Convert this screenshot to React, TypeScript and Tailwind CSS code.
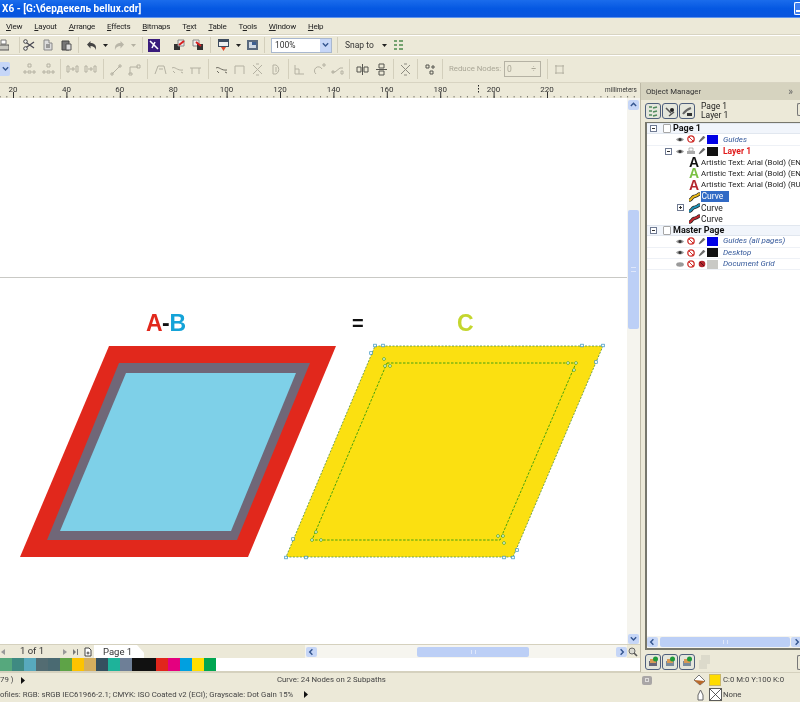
import React from 'react';

const menus = [
  ['V', 'iew'], ['L', 'ayout'], ['A', 'rrange'], ['E', 'ffects'], ['B', 'itmaps'],
  ['Te', 'xt'], ['T', 'able'], ['To', 'ols'], ['W', 'indow'], ['H', 'elp'],
];

const palette = [
  '#56a87d', '#3f8a82', '#58a9bd', '#536c72', '#4a6a72', '#5ea347', '#fdc300', '#d4ae5e', '#35505f',
  '#1eb39a', '#6e7f97', '#111111', '#111111', '#e1261c', '#e4007f', '#00a0e0', '#ffde00', '#00a651',
];

const GREY = '#b4b1a2';
const DARK = '#55554f';

const Ico = ({ w = 12, h = 12, vb, className = '', children }: { w?: number; h?: number; vb?: string; className?: string; children: React.ReactNode }) => (
  <svg width={w} height={h} viewBox={vb ?? `0 0 ${w} ${h}`} fill="none" className={`shrink-0 ${className}`}>{children}</svg>
);

const Sep = ({ className = '', tall = false }: { className?: string; tall?: boolean }) => (
  <div className={`${tall ? 'h-[20px]' : 'h-[16px]'} w-[2px] shrink-0 border-l border-[#d3cfbc] border-r-white ${className}`} />
);

const Drop = ({ className = '', grey = false }: { className?: string; grey?: boolean }) => (
  <Ico w={5} h={3} className={className}><path d="M0 0h5L2.500 3z" fill={grey ? GREY : '#222'} /></Ico>
);

const Chevron = ({ dir }: { dir: 'up' | 'down' | 'left' | 'right' }) => {
  const d = { up: 'M1.500 5.500 4.500 2.500 7.500 5.500', down: 'M1.500 2.500 4.500 5.500 7.500 2.500', left: 'M5.500 1.500 2.500 4.500 5.500 7.500', right: 'M3.500 1.500 6.500 4.500 3.500 7.500' }[dir];
  return <Ico w={9} h={8} vb="0 0 9 9"><path d={d} stroke="#34558f" strokeWidth="1.600" /></Ico>;
};

const ScrollBtn = ({ dir, className = '' }: { dir: 'up' | 'down' | 'left' | 'right'; className?: string }) => (
  <div className={`w-[11px] h-[10px] shrink-0 rounded-[2px] bg-[#c6d6f7] flex items-center justify-center ${className}`}><Chevron dir={dir} /></div>
);

// node tool icons in the property bar
const NodeIco = ({ variant, color = GREY }: { variant: number; color?: string }) => {
  const paths = [
    'M5 1h3v3H5zM1 8h2v2H1zM5 8h3v2H5zM10 8h2v2h-2z',
    'M1 3h2v6H1zM10 3h2v6h-2zM4 6h5M7 4v4',
    'M2 11 10 3M9 2h2v2H9zM1 10h2v2H1z',
    'M2 11V4h8M9 2h3v3H9zM1 10h3v2H1z',
    'M1 11 4 3h6l2 8M5 6h4',
    'M1 5c3-2 5 3 11 2M2 8l2 2M10 9l2 1',
    'M1 5h11M3 5v6M10 5v6',
    'M2 11V3h9v8',
    'M2 2l9 9M11 2l-9 9M5 1h3M5 12h3',
    'M3 2h3a5 5 0 0 1 0 9H3zM6 4v5',
    'M2 2v9h9M2 6h4v5',
    'M3 11a4 4 0 1 1 6-5M10 1h2v2h-2z',
    'M1 9h3l5-4h3M10 8h2v3h-2zM1 8h2v2H1z',
    'M1 4h4v5H1zM8 4h4v5H8zM6.500 1v11',
    'M4 1h5v4H4zM4 8h5v4H4zM1 6.500h11',
    'M2 2h3v3H2zM8 3h2v2H8zM6 8h3v3H6z',
    'M2 3h9M2 10h9M3 2v9M10 2v9',
  ];
  return <Ico w={13} h={13}><path d={paths[variant]} stroke={color} strokeWidth="1" /></Ico>;
};

const TitleBar = () => (
  <div className="h-[18px] shrink-0 flex items-center justify-between bg-gradient-to-b from-[#1a6cec] via-[#0558e2] to-[#0a55de] border-b border-[#5f95ee]">
    <span className="ml-[2px] text-[10px] font-bold tracking-[0.05px] text-white whitespace-nowrap">X6 - [G:\бердекель bellux.cdr]</span>
    <div className="w-[6px] h-[13px] rounded-l-[2px] border border-r-0 border-white bg-[#3f7ff0] flex items-end pb-[2px] pl-[1px]"><div className="w-[5px] h-[2px] bg-white" /></div>
  </div>
);

const MenuBar = () => (
  <div className="h-[17px] shrink-0 flex items-center gap-[12px] pl-[6px] pt-[1px] text-[8px] tracking-[-0.25px] text-[#222] border-b border-[#d8d4c2]">
    {menus.map(([a, b]) => (
      <span key={a + b} className="whitespace-nowrap">
        {a.length > 1 ? a.slice(0, -1) : ''}<span className="underline">{a.slice(-1)}</span>{b}
      </span>
    ))}
  </div>
);

const MainToolbar = () => (
  <div className="h-[20px] shrink-0 flex items-center border-t border-white border-b border-b-[#d8d4c2] text-[8.5px] text-[#333]">
    <Ico w={9} h={13} vb="3 0 9 13"><path d="M4 1h5v4H4z" fill="#fff" stroke="#777" /><path d="M1 6h11v5H1z" fill="#c9c8c0" stroke="#555" /></Ico>
    <Sep className="ml-[10px]" />
    <Ico w={12} h={12} className="ml-[2px]"><path d="M1 2l10 7M1 10l10-7" stroke="#4a4a55" strokeWidth="1.300" /><circle cx="2.500" cy="2.500" r="1.800" fill="#eee" stroke="#444" /><circle cx="2.500" cy="9.500" r="1.800" fill="#eee" stroke="#444" /></Ico>
    <Ico w={10} h={12} className="ml-[8px]"><path d="M1 1h5v3h3v7H1z" fill="#ddd" stroke="#888" /><path d="M3 6h4M3 8h4" stroke="#555" /></Ico>
    <Ico w={11} h={12} className="ml-[8px]"><path d="M1 2h7v9H1z" fill="#777" stroke="#444" /><path d="M5 5h5v6H5z" fill="#ddd" stroke="#555" /></Ico>
    <Sep className="ml-[6px]" />
    <Ico w={11} h={11} className="ml-[6px]"><path d="M1 4.500 4.500 1v2c4 0 6 2 5.500 7C9 7 7 6 4.500 6v2.500z" fill="#444" /></Ico>
    <Drop className="ml-[6px]" />
    <Ico w={11} h={11} className="ml-[6px]"><path d="M10 4.500 6.500 1v2c-4 0-6 2-5.500 7C2 7 4 6 6.500 6v2.500z" fill="#b9b6a8" /></Ico>
    <Drop grey className="ml-[6px]" />
    <Sep className="ml-[6px]" />
    <div className="ml-[4px] w-[12px] h-[13px] bg-[#3a1c7c] shrink-0 flex items-center justify-center">
      <Ico w={10} h={10}><path d="M1 1l8 8M6 2 3 8" stroke="#fff" strokeWidth="1.600" /></Ico>
    </div>
    <Ico w={12} h={12} className="ml-[13px]"><path d="M1 5h6v6H1z" fill="#333" /><path d="M5 1h6v6H5z" fill="#eee" stroke="#888" /><path d="M6 6l5-4" stroke="#d82020" strokeWidth="2" /></Ico>
    <Ico w={12} h={12} className="ml-[7px]"><path d="M1 1h6v6H1z" fill="#eee" stroke="#888" /><path d="M5 5h6v6H5z" fill="#333" /><path d="M4 3l5 4" stroke="#d82020" strokeWidth="2" /></Ico>
    <Sep className="ml-[6px]" />
    <Ico w={11} h={12} className="ml-[6px]"><path d="M0 0h11v8H0z" fill="#3d4b5e" /><path d="M1 3h9v4H1z" fill="#eee" /><path d="M3 8h5L5.500 12z" fill="#e0472a" /></Ico>
    <Drop className="ml-[7px]" />
    <Ico w={11} h={12} className="ml-[6px]"><path d="M0 1h11v10H0z" fill="#59697d" /><path d="M2 3h7v6H2z" fill="#cfd8e2" /><path d="M5 3h4v3H5z" fill="#3d5f90" /></Ico>
    <Sep className="ml-[6px]" />
    <div className="ml-[5px] w-[61px] h-[15px] shrink-0 bg-white border border-[#a9b8cf] flex items-center justify-between pl-[3px] text-[8.5px]">
      <span>100%</span>
      <div className="w-[11px] h-[13px] bg-[#c6d6f7] flex items-center justify-center"><Chevron dir="down" /></div>
    </div>
    <Sep className="ml-[5px]" />
    <span className="ml-[6px] w-[27px] whitespace-nowrap">Snap to</span>
    <Drop className="ml-[10px]" />
    <Ico w={11} h={12} className="ml-[6px]"><path d="M1 2h3M1 6h3M1 10h3M6 2h4M6 6h4M6 10h4" stroke="#4c8a4c" strokeWidth="1.500" /></Ico>
  </div>
);

const PropertyBar = () => (
  <div className="h-[28px] shrink-0 flex items-center border-t border-white border-b border-b-[#d8d4c2]">
    <div className="w-[10px] h-[14px] bg-[#c6d6f7] rounded-r-[2px] flex items-center justify-center shrink-0 overflow-hidden"><Chevron dir="down" /></div>
    <div className="ml-[13px]"><NodeIco variant={0} /></div>
    <div className="ml-[6px]"><NodeIco variant={0} /></div>
    <Sep tall className="ml-[5px]" />
    <div className="ml-[4px]"><NodeIco variant={1} /></div>
    <div className="ml-[5px]"><NodeIco variant={1} /></div>
    <Sep tall className="ml-[6px]" />
    <div className="ml-[5px]"><NodeIco variant={2} /></div>
    <div className="ml-[5px]"><NodeIco variant={3} /></div>
    <Sep tall className="ml-[6px]" />
    <div className="ml-[5px]"><NodeIco variant={4} /></div>
    <div className="ml-[4px]"><NodeIco variant={5} /></div>
    <div className="ml-[5px]"><NodeIco variant={6} /></div>
    <Sep tall className="ml-[6px]" />
    <div className="ml-[5px]"><NodeIco variant={5} color="#6c6a60" /></div>
    <div className="ml-[5px]"><NodeIco variant={7} /></div>
    <div className="ml-[5px]"><NodeIco variant={8} /></div>
    <div className="ml-[6px]"><NodeIco variant={9} /></div>
    <Sep tall className="ml-[5px]" />
    <div className="ml-[3px]"><NodeIco variant={10} /></div>
    <div className="ml-[7px]"><NodeIco variant={11} /></div>
    <div className="ml-[5px]"><NodeIco variant={12} /></div>
    <Sep tall className="ml-[5px]" />
    <div className="ml-[5px]"><NodeIco variant={13} color={DARK} /></div>
    <div className="ml-[6px]"><NodeIco variant={14} color={DARK} /></div>
    <Sep tall className="ml-[5px]" />
    <div className="ml-[4px]"><NodeIco variant={8} color="#8d8b80" /></div>
    <Sep tall className="ml-[5px]" />
    <div className="ml-[5px]"><NodeIco variant={15} color={DARK} /></div>
    <Sep tall className="ml-[5px]" />
    <span className="ml-[5px] w-[50px] text-[7.8px] text-[#aaa797] whitespace-nowrap">Reduce Nodes:</span>
    <div className="ml-[5px] w-[37px] h-[16px] shrink-0 border border-[#b5b2a4] flex items-center justify-between px-[2px] text-[8.5px] text-[#aaa797]">
      <span>0</span><span className="pr-[2px]">÷</span>
    </div>
    <Sep tall className="ml-[6px]" />
    <div className="ml-[4px]"><NodeIco variant={16} /></div>
  </div>
);

const Ruler = () => {
  const nums = [20, 40, 60, 80, 100, 120, 140, 160, 180, 200, 220];
  const ticks = Array.from({ length: 96 }, (_, i) => 6.675 * i - 0.35);
  return (
    <svg width={640} height={15} className="shrink-0 block">
      {ticks.map((x, i) => <rect key={i} x={x} y={13} width={1} height={1.500} fill="#77756b" />)}
      {nums.map((n, i) => {
        const x = 13 + i * 53.4;
        return (
          <g key={n}>
            <rect x={x} y={9} width={1} height={6} fill="#333" />
            <text x={x} y={8.500} textAnchor="middle" fontSize="8" fill="#333">{n}</text>
          </g>
        );
      })}
      <path d="M478.500 2v8" stroke="#222" strokeDasharray="1.500 1.500" />
      <text x={605} y={9} fontSize="6.400" fill="#333">millimeters</text>
    </svg>
  );
};

const Canvas = () => {
  const outerNodes = [[375, 345.5], [383, 345.5], [582, 345.5], [603, 345.5], [596, 362], [517, 550], [513, 557.5], [504, 557.5], [306, 557.5], [286, 557.5], [293, 539], [371, 353]];
  const innerNodes = [[384, 359], [385, 366], [390, 366], [568, 363], [576, 363], [574, 370], [504, 543], [503, 536], [498, 536], [321, 540], [312, 540], [316, 532]];
  return (
    <svg width={627} height={546} viewBox="0 98 627 546" className="shrink-0 block bg-white">
      <rect x={0} y={277} width={627} height={1} fill="#c9c9c5" />
      <text x={146} y={330.500} fontFamily="'Liberation Sans', sans-serif" fontWeight="700" fontSize="23" fill="#e1281c">A</text>
      <text x={162} y={330.500} fontFamily="'Liberation Sans', sans-serif" fontWeight="700" fontSize="23" fill="#111">-</text>
      <text x={169.500} y={330.500} fontFamily="'Liberation Sans', sans-serif" fontWeight="700" fontSize="23" fill="#14a3d8">B</text>
      <text x={352} y={330} fontFamily="'Liberation Sans', sans-serif" fontWeight="700" fontSize="20" fill="#111">=</text>
      <text x={457} y={330.500} fontFamily="'Liberation Sans', sans-serif" fontWeight="700" fontSize="23" fill="#c4d62e">C</text>

      <polygon points="109,346 336,346 248,557 20,557" fill="#e1281c" />
      <polygon points="119,363 310,363 237,540 47,540" fill="#706778" />
      <polygon points="126,373 296,373 231,531 60,531" fill="#7ed0e8" />

      <polygon points="375,346 603,346 513,557 286,557" fill="#fbe011" stroke="#4f8f4a" strokeWidth="0.800" strokeDasharray="2 1.500" />
      <polygon points="387,363 576,363 500,540 312,540" fill="none" stroke="#2f9a10" strokeWidth="0.900" strokeDasharray="2.500 1.500" />
      {outerNodes.map(([x, y], i) => <rect key={i} x={x - 1.300} y={y - 1.300} width={2.600} height={2.600} fill="#fff" stroke="#2e8fc0" strokeWidth="0.700" />)}
      {innerNodes.map(([x, y], i) => <circle key={i} cx={x} cy={y} r={1.400} fill="#fff" stroke="#2f9a10" strokeWidth="0.700" />)}
    </svg>
  );
};

const Eye = ({ closed = false }: { closed?: boolean }) => (
  <Ico w={8} h={7}>
    {closed
      ? <ellipse cx="4" cy="3.500" rx="3.800" ry="2.200" fill="#9a9a9a" />
      : <><path d="M0 3.500C2 1 6 1 8 3.500 6 6 2 6 0 3.500z" fill="#999" /><circle cx="4" cy="3.500" r="1.500" fill="#333" /></>}
  </Ico>
);

const NoPrint = () => (
  <Ico w={8} h={8} className="ml-[3px]"><circle cx="4" cy="4" r="3.200" fill="#fff" stroke="#d0312d" strokeWidth="1.300" /><path d="M2 2l4 4" stroke="#d0312d" strokeWidth="1" /></Ico>
);

const Pencil = ({ locked = false }: { locked?: boolean }) => (
  <Ico w={8} h={8} className="ml-[3px]">
    {locked
      ? <><circle cx="4" cy="4" r="3.300" fill="#b3262e" /><path d="M2 2l4 4" stroke="#5c1015" /></>
      : <path d="M1 7l1-2 3.500-4 1.500 1.500L3 6z" fill="#6b6b6b" stroke="#444" strokeWidth="0.400" />}
  </Ico>
);

const Swatch = ({ color }: { color: string }) => <div className={`ml-[1px] w-[11px] h-[9px] shrink-0 ${color}`} />;

const PlusMinus = ({ plus = false }: { plus?: boolean }) => (
  <div className="relative w-[7px] h-[7px] shrink-0 border border-[#6f7a92] bg-white">
    <div className="absolute left-[1px] top-[2px] w-[3px] h-px bg-[#333]" />
    {plus && <div className="absolute left-[2px] top-[1px] w-px h-[3px] bg-[#333]" />}
  </div>
);

const PageRow = ({ label }: { label: string }) => (
  <div className="h-[11.33px] flex items-center pl-[3px] bg-[#f1f5fb] border-y border-[#e1e7ef]">
    <PlusMinus />
    <div className="ml-[6px] w-[8px] h-[9px] shrink-0 bg-white border border-[#a7a7a7] rounded-[1px]" />
    <span className="ml-[2px] font-bold text-[9px] text-[#111] whitespace-nowrap">{label}</span>
  </div>
);

const LayerRow = ({ label, color, grid = false }: { label: string; color: string; grid?: boolean }) => (
  <div className="h-[11.33px] flex items-center pl-[29px] border-b border-[#eef1f6]">
    <Eye closed={grid} />
    <NoPrint />
    <Pencil locked={grid} />
    <Swatch color={color} />
    <span className="ml-[5px] italic text-[8px] text-[#34589a] whitespace-nowrap">{label}</span>
  </div>
);

const CurveGlyph = ({ fill }: { fill: string }) => (
  <Ico w={11} h={10}>
    <path d="M1 8c2-1 2-3 4-3.500S8 4 10 2" stroke="#222" strokeWidth="3.400" strokeLinecap="round" />
    <path d="M1 8c2-1 2-3 4-3.500S8 4 10 2" stroke={fill} strokeWidth="2" strokeLinecap="round" />
  </Ico>
);

const TextRow = ({ glyph, label }: { glyph: string; label: string }) => (
  <div className="h-[11.33px] flex items-center pl-[41px]">
    <span className={`w-[12px] text-center font-bold text-[14px] leading-[11px] font-['Liberation_Sans'] ${glyph}`}>A</span>
    <span className="ml-[1px] text-[7.9px] text-[#222] whitespace-nowrap">{label}</span>
  </div>
);

const PanelButton = ({ children }: { children: React.ReactNode }) => (
  <div className="w-[16px] h-[16px] shrink-0 rounded-[3px] border border-[#4f5f7c] bg-[#e4e6dc] flex items-center justify-center">{children}</div>
);

const RoundIcon = ({ dot = '#1f9a3a', base = '#7a8b9c' }: { dot?: string; base?: string }) => (
  <Ico w={12} h={12}><path d="M2 5h8v5H2z" fill={base} /><path d="M3 3h6v4H3z" fill="#d99a55" /><circle cx="8.500" cy="3" r="2.500" fill={dot} /></Ico>
);

const ObjectManager = () => (
  <div className="w-[160px] shrink-0 flex flex-col border-l border-[#bdb9a6] overflow-hidden">
    <div className="h-[17px] shrink-0 flex items-center justify-between px-[5px] pr-[7px] bg-[#d6d3bf] text-[7.8px] text-[#333]">
      <span>Object Manager</span>
      <span className="text-[#666] text-[10px] leading-none">»</span>
    </div>
    <div className="h-[22px] shrink-0 flex items-center pl-[4px]">
      <PanelButton><Ico w={12} h={12}><path d="M2 2h3M2 6h3M2 10h3M6 3l4-1M6 7l4-1M6 11l4-1" stroke="#4f8a5c" strokeWidth="1.500" /></Ico></PanelButton>
      <div className="ml-px"><PanelButton><Ico w={12} h={12}><path d="M2 3l5 5M5 11l5-4" stroke="#555" strokeWidth="1.500" /><circle cx="8" cy="5" r="2" fill="#222" /></Ico></PanelButton></div>
      <div className="ml-px"><PanelButton><Ico w={12} h={12}><path d="M2 9c2-3 5-5 8-6" stroke="#666" strokeWidth="2" /><path d="M6 8h5v3H6z" fill="#333" /></Ico></PanelButton></div>
      <div className="ml-[6px] flex flex-col text-[8.5px] leading-[9.5px] text-[#222]">
        <span>Page 1</span>
        <span>Layer 1</span>
      </div>
      <div className="ml-auto mb-[3px] w-[3px] h-[13px] border-y border-l border-[#777] rounded-l-[2px]" />
    </div>
    <div className="ml-[4px] w-[170px] h-[528px] shrink-0 flex flex-col bg-white border-x-2 border-b-2 border-t border-[#77776c]">
      <div className="flex-1 flex flex-col">
        <PageRow label="Page 1" />
        <LayerRow label="Guides" color="bg-[#0000e6]" />
        <div className="h-[11.33px] flex items-center pl-[18px]">
          <PlusMinus />
          <div className="ml-[4px] flex"><Eye /></div>
          <Ico w={8} h={8} className="ml-[3px]"><path d="M2 1h4v3H2z" fill="#fff" stroke="#888" strokeWidth="0.600" /><path d="M0 4h8v3H0z" fill="#aaa" /></Ico>
          <Pencil />
          <Swatch color="bg-[#111111]" />
          <span className="ml-[5px] font-bold text-[8.5px] text-[#e01a1a] whitespace-nowrap">Layer 1</span>
        </div>
        <TextRow glyph="text-[#111111]" label="Artistic Text: Arial (Bold) (EN" />
        <TextRow glyph="text-[#7ac143]" label="Artistic Text: Arial (Bold) (EN" />
        <TextRow glyph="text-[#b3262e]" label="Artistic Text: Arial (Bold) (RU" />
        <div className="h-[11.33px] flex items-center pl-[41px]">
          <div className="w-[12px] flex justify-center"><CurveGlyph fill="#e8b91c" /></div>
          <span className="ml-px w-[28px] h-[11px] bg-[#316ac5] text-white text-[8.5px] leading-[11px] pl-[0.5px]">Curve</span>
        </div>
        <div className="h-[11.33px] flex items-center pl-[30px]">
          <PlusMinus plus />
          <div className="ml-[4px] w-[12px] flex justify-center"><CurveGlyph fill="#1f93b8" /></div>
          <span className="ml-px text-[8.5px] text-[#222]">Curve</span>
        </div>
        <div className="h-[11.33px] flex items-center pl-[41px]">
          <div className="w-[12px] flex justify-center"><CurveGlyph fill="#c0272d" /></div>
          <span className="ml-px text-[8.5px] text-[#222]">Curve</span>
        </div>
        <PageRow label="Master Page" />
        <LayerRow label="Guides (all pages)" color="bg-[#0000e6]" />
        <LayerRow label="Desktop" color="bg-[#111111]" />
        <LayerRow label="Document Grid" color="bg-[#c9c9c5]" grid />
      </div>
      <div className="h-[12px] shrink-0 flex items-center bg-[#f5f4ee]">
        <ScrollBtn dir="left" />
        <div className="ml-[2px] w-[130px] h-[10px] rounded-[2px] bg-[#bccff6] flex items-center justify-center">
          <div className="w-[5px] h-[4px] border-x border-[#dfe7fa]" />
        </div>
        <ScrollBtn dir="right" className="ml-[1px]" />
      </div>
    </div>
    <div className="flex items-center pl-[4px] mt-[4px] gap-px">
      <PanelButton><RoundIcon base="#667" /></PanelButton>
      <PanelButton><RoundIcon /></PanelButton>
      <PanelButton><RoundIcon /></PanelButton>
      <Ico w={15} h={16} className="ml-[1px]"><path d="M4 1h9v9h-3v5H2V6h2z" fill="#dcdacb" /></Ico>
      <div className="ml-auto w-[3px] h-[15px] border-y border-l border-[#777] rounded-l-[2px]" />
    </div>
  </div>
);

const PageTabs = () => (
  <div className="h-[14px] shrink-0 flex items-center bg-[#ece9d8] border-t border-[#d5d1be] text-[9.5px] text-[#333]">
    <Ico w={4} h={6} className="ml-[1px]"><path d="M4 0v6L0 3z" fill="#999" /></Ico>
    <span className="ml-[15px] w-[24px] whitespace-nowrap">1 of 1</span>
    <Ico w={4} h={6} className="ml-[19px]"><path d="M0 0v6l4-3z" fill="#999" /></Ico>
    <Ico w={5} h={6} className="ml-[6px]"><path d="M0 0v6l3-3zM4 0h1v6H4z" fill="#777" /></Ico>
    <Ico w={8} h={10} className="ml-[6px]"><path d="M1 1h4l2 2v6H1z" fill="#fff" stroke="#444" /><path d="M2.500 6h3M4 4.500v3" stroke="#444" /></Ico>
    <div className="ml-[2px] w-[50px] h-[13px] shrink-0 bg-white pl-[9px] leading-[13px] whitespace-nowrap [clip-path:polygon(0_0,86%_0,100%_60%,100%_100%,0_100%)]">Page 1</div>
    <div className="ml-[161px] w-[322px] h-[13px] shrink-0 flex items-center bg-[#f6f5ef]">
      <ScrollBtn dir="left" className="ml-px" />
      <div className="ml-[100px] w-[112px] h-[10px] rounded-[2px] bg-[#bccff6] flex items-center justify-center">
        <div className="w-[5px] h-[4px] border-x border-[#dfe7fa]" />
      </div>
      <ScrollBtn dir="right" className="ml-[87px]" />
    </div>
    <Ico w={10} h={10} className="ml-[1px]"><circle cx="4" cy="4" r="3" fill="#dcdcd4" stroke="#666" /><path d="M6 6l3 3" stroke="#555" strokeWidth="1.600" /></Ico>
  </div>
);

const VScroll = () => (
  <div className="w-[13px] shrink-0 flex flex-col items-center bg-[#f5f4ee] pt-[2px]">
    <ScrollBtn dir="up" />
    <div className="mt-[100px] w-[11px] h-[119px] rounded-[2px] bg-[#bccff6] flex items-center justify-center">
      <div className="w-[5px] h-[5px] border-y border-[#dfe7fa]" />
    </div>
    <div className="flex-1" />
    <ScrollBtn dir="down" />
  </div>
);

const StatusBar = () => (
  <div className="h-[30px] shrink-0 flex flex-col border-t border-[#d5d1be] text-[7.8px] text-[#444]">
    <div className="h-[15px] flex items-center">
      <span className="w-[15px] whitespace-nowrap">79 )</span>
      <Ico w={4} h={7} className="ml-[6px]"><path d="M0 0v7l4-3.500z" fill="#111" /></Ico>
      <span className="ml-[252px] w-[110px] whitespace-nowrap">Curve: 24 Nodes on 2 Subpaths</span>
      <div className="ml-[255px] w-[10px] h-[9px] bg-[#a9a6a6] rounded-[2px] flex items-center justify-center shrink-0"><div className="w-[4px] h-[4px] border border-[#dedcdc]" /></div>
      <Ico w={13} h={12} className="ml-[41px]"><path d="M1 6l5-5 6 6-5 4z" fill="#fff" stroke="#777" /><path d="M1 6l11 1-5 4z" fill="#b8692a" /></Ico>
      <div className="ml-[3px] w-[12px] h-[12px] bg-[#ffdc00] border border-[#c9b76a] shrink-0" />
      <span className="ml-[2px] whitespace-nowrap">C:0 M:0 Y:100 K:0</span>
    </div>
    <div className="h-[15px] flex items-center">
      <span className="w-[298px] whitespace-nowrap">ofiles: RGB: sRGB IEC61966-2.1; CMYK: ISO Coated v2 (ECI); Grayscale: Dot Gain 15%</span>
      <Ico w={4} h={7} className="ml-[6px]"><path d="M0 0v7l4-3.500z" fill="#111" /></Ico>
      <Ico w={7} h={12} className="ml-[389px]"><path d="M3.500 1 6 6v5H1V6z" fill="#fff" stroke="#666" /></Ico>
      <Ico w={13} h={13} className="ml-[5px]"><path d="M.5.5h12v12H.5zM.5.5l12 12M12.500.5l-12 12" fill="#fff" stroke="#333" strokeWidth="0.800" /></Ico>
      <span className="ml-[1px] whitespace-nowrap">None</span>
    </div>
  </div>
);

export default function App() {
  return (
    <div className="w-[800px] h-[702px] flex flex-col overflow-hidden bg-[#ece9d8] font-['Roboto',sans-serif] blur-[0.3px]">
      <TitleBar />
      <MenuBar />
      <MainToolbar />
      <PropertyBar />
      <div className="flex-1 flex min-h-0">
        <div className="w-[640px] shrink-0 flex flex-col overflow-hidden">
          <Ruler />
          <div className="flex h-[546px] shrink-0">
            <Canvas />
            <VScroll />
          </div>
          <PageTabs />
          <div className="h-[14px] shrink-0 flex bg-white border-b border-[#d5d1be]">
            {palette.map((c, i) => <div key={i} className="w-[12px] h-[13px] shrink-0" style={{ backgroundColor: c }} />)}
          </div>
        </div>
        <ObjectManager />
      </div>
      <StatusBar />
    </div>
  );
}
